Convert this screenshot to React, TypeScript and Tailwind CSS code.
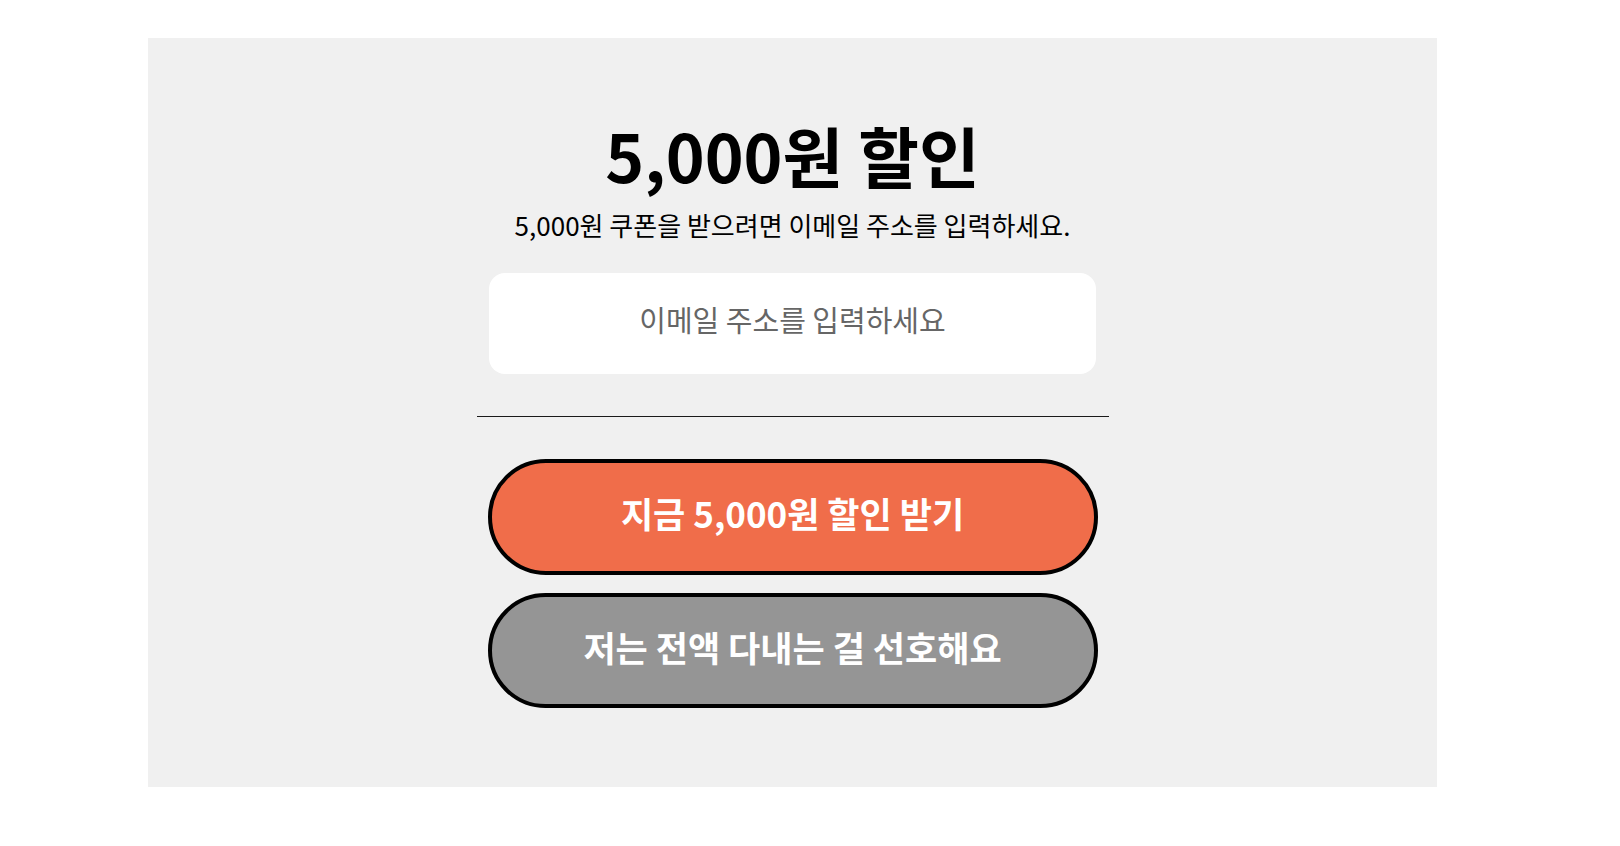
import React from 'react';

const font = { fontFamily: '"Noto Sans CJK KR", "Noto Sans", sans-serif' };

const CouponPanel = () => {
    return (
        <div className="ml-[148px] mt-[38px] w-[1289px] h-[749px] bg-[#f0f0f0] flex flex-col items-center pt-[80px]">
            <h1 className="text-[66px] leading-[72px] font-bold text-black">
                5,000원 할인
            </h1>
            <p className="mt-[17px] text-[26px] leading-[36px] text-black">
                5,000원 쿠폰을 받으려면 이메일 주소를 입력하세요.
            </p>
            <input
                type="email"
                placeholder="이메일 주소를 입력하세요"
                className="mt-[30px] w-[607px] h-[101px] pb-[9px] rounded-[16px] bg-white text-center text-[29px] text-black placeholder:text-[#666666] outline-none"
                style={font}
            />
            <div className="mt-[42px] w-[632px] h-px bg-[#1a1a1a]" />
            <button
                className="mt-[42px] w-[610px] h-[116px] pb-[7px] rounded-full border-[4px] border-black bg-[#f06d4a] text-white text-[35px] font-bold"
                style={font}
            >
                지금 5,000원 할인 받기
            </button>
            <button
                className="mt-[18px] w-[610px] h-[115px] pb-[7px] rounded-full border-[4px] border-black bg-[#959595] text-white text-[35px] font-bold"
                style={font}
            >
                저는 전액 다내는 걸 선호해요
            </button>
        </div>
    );
};

export default function App() {
    return (
        <div className="min-h-[846px] bg-white pt-px -mt-px" style={font}>
            <CouponPanel />
        </div>
    );
}
